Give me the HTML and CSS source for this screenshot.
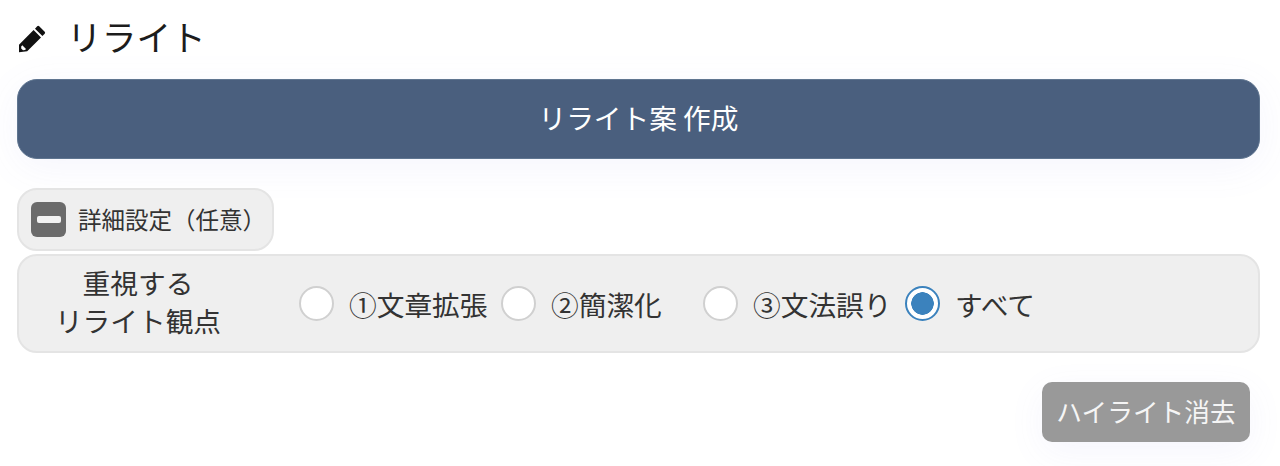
FILE: index.html
```html
<!DOCTYPE html>
<html lang="ja">
<head>
<meta charset="utf-8">
<title>リライト</title>
<link rel="stylesheet" href="styles.css">
</head>
<body>
<main class="page">
  <h2 class="title">
    <svg class="pencil" viewBox="0 0 28 28" aria-hidden="true"><path d="M21.2 1.3 L26.7 6.8 Q27.6 7.8 26.7 8.8 L24.4 11.1 L17 3.7 L19.2 1.3 Q20.2 0.4 21.2 1.3 Z M15.6 5.1 L23 12.5 L9.2 26.3 L1 27.2 L1 19.7 Z M3.2 21.4 L3.2 23.4 L5 25.2 L7 25 L8 24 L4.3 20.2 Z"/></svg>
    <span>リライト</span>
  </h2>
  <button class="primary" type="button"><span class="primary-text">リライト案 作成</span></button>
  <div class="details-toggle">
    <span class="minus"><span class="minus-bar"></span></span>
    <span class="details-text">詳細設定（任意）</span>
  </div>
  <div class="panel">
    <div class="panel-label">重視する<br>リライト観点</div>
    <div class="options">
      <label class="option"><span class="radio"></span><span>①文章拡張</span></label>
      <label class="option"><span class="radio"></span><span>②簡潔化</span></label>
      <label class="option"><span class="radio"></span><span>③文法誤り</span></label>
      <label class="option"><span class="radio checked"></span><span>すべて</span></label>
    </div>
  </div>
  <div class="actions">
    <button class="secondary" type="button">ハイライト消去</button>
  </div>
</main>
</body>
</html>
```
FILE: styles.css
```css
* { box-sizing: border-box; }
html, body { margin: 0; height: 466px; overflow: hidden; background: #fff; }
body { font-family: "Noto Sans CJK JP", "Noto Sans", sans-serif; color: #222; }
.page { padding: 0 20px 0 17px; }
.title { height: 79px; margin: 0; padding: 0 0 8px 1px; display: flex; align-items: center; gap: 21px; font-size: 34.7px; font-weight: 400; color: #1c1c1c; }
.pencil { width: 28px; height: 28px; margin-top: 6px; flex: none; fill: #111; }
.primary { display: block; width: 100%; height: 80px; padding: 0 0 4px; border: 1px solid #5f7590; border-radius: 20px; background: #4a5f7e; color: #fff; font: 400 27.7px "Noto Sans CJK JP", sans-serif; box-shadow: 0 8px 40px rgba(120, 120, 220, .07); }
.details-toggle { width: 257px; height: 63px; margin-top: 29px; padding: 0 0 2px 12px; display: flex; align-items: center; gap: 12px; border: 2px solid #e4e4e4; border-radius: 20px; background: #efefef; font-size: 23.5px; color: #333; white-space: nowrap; }
.minus { width: 35px; height: 35px; margin-top: 2px; display: flex; align-items: center; justify-content: center; flex: none; border-radius: 6px; background: #6b6b6b; }
.minus-bar { width: 24px; height: 7px; border-radius: 2px; background: #f2f2f2; }
.panel { height: 99px; margin-top: 3px; display: flex; align-items: center; border: 2px solid #e4e4e4; border-radius: 20px; background: #efefef; font-size: 27.7px; color: #333; }
.panel-label { width: 238px; margin: 0 42px 5px 0; text-align: center; line-height: 38px; flex: none; }
.options { display: flex; }
.option { width: 202px; display: flex; align-items: center; gap: 15px; flex: none; white-space: nowrap; }
.radio { width: 35px; height: 35px; flex: none; border: 2px solid #d0d0d0; border-radius: 50%; background: #fff; }
.radio.checked { border: 2.5px solid #3b82bd; background: radial-gradient(circle, #3b82bd 0 11px, #fff 11.5px); }
.actions { margin-top: 29px; padding-right: 10px; display: flex; justify-content: flex-end; }
.secondary { width: 208px; height: 60px; padding: 0 0 4px; border: 0; border-radius: 10px; background: #999; color: #f5f5f5; font: 400 25.7px "Noto Sans CJK JP", sans-serif; box-shadow: 0 10px 36px rgba(120, 120, 220, .07); }
```
